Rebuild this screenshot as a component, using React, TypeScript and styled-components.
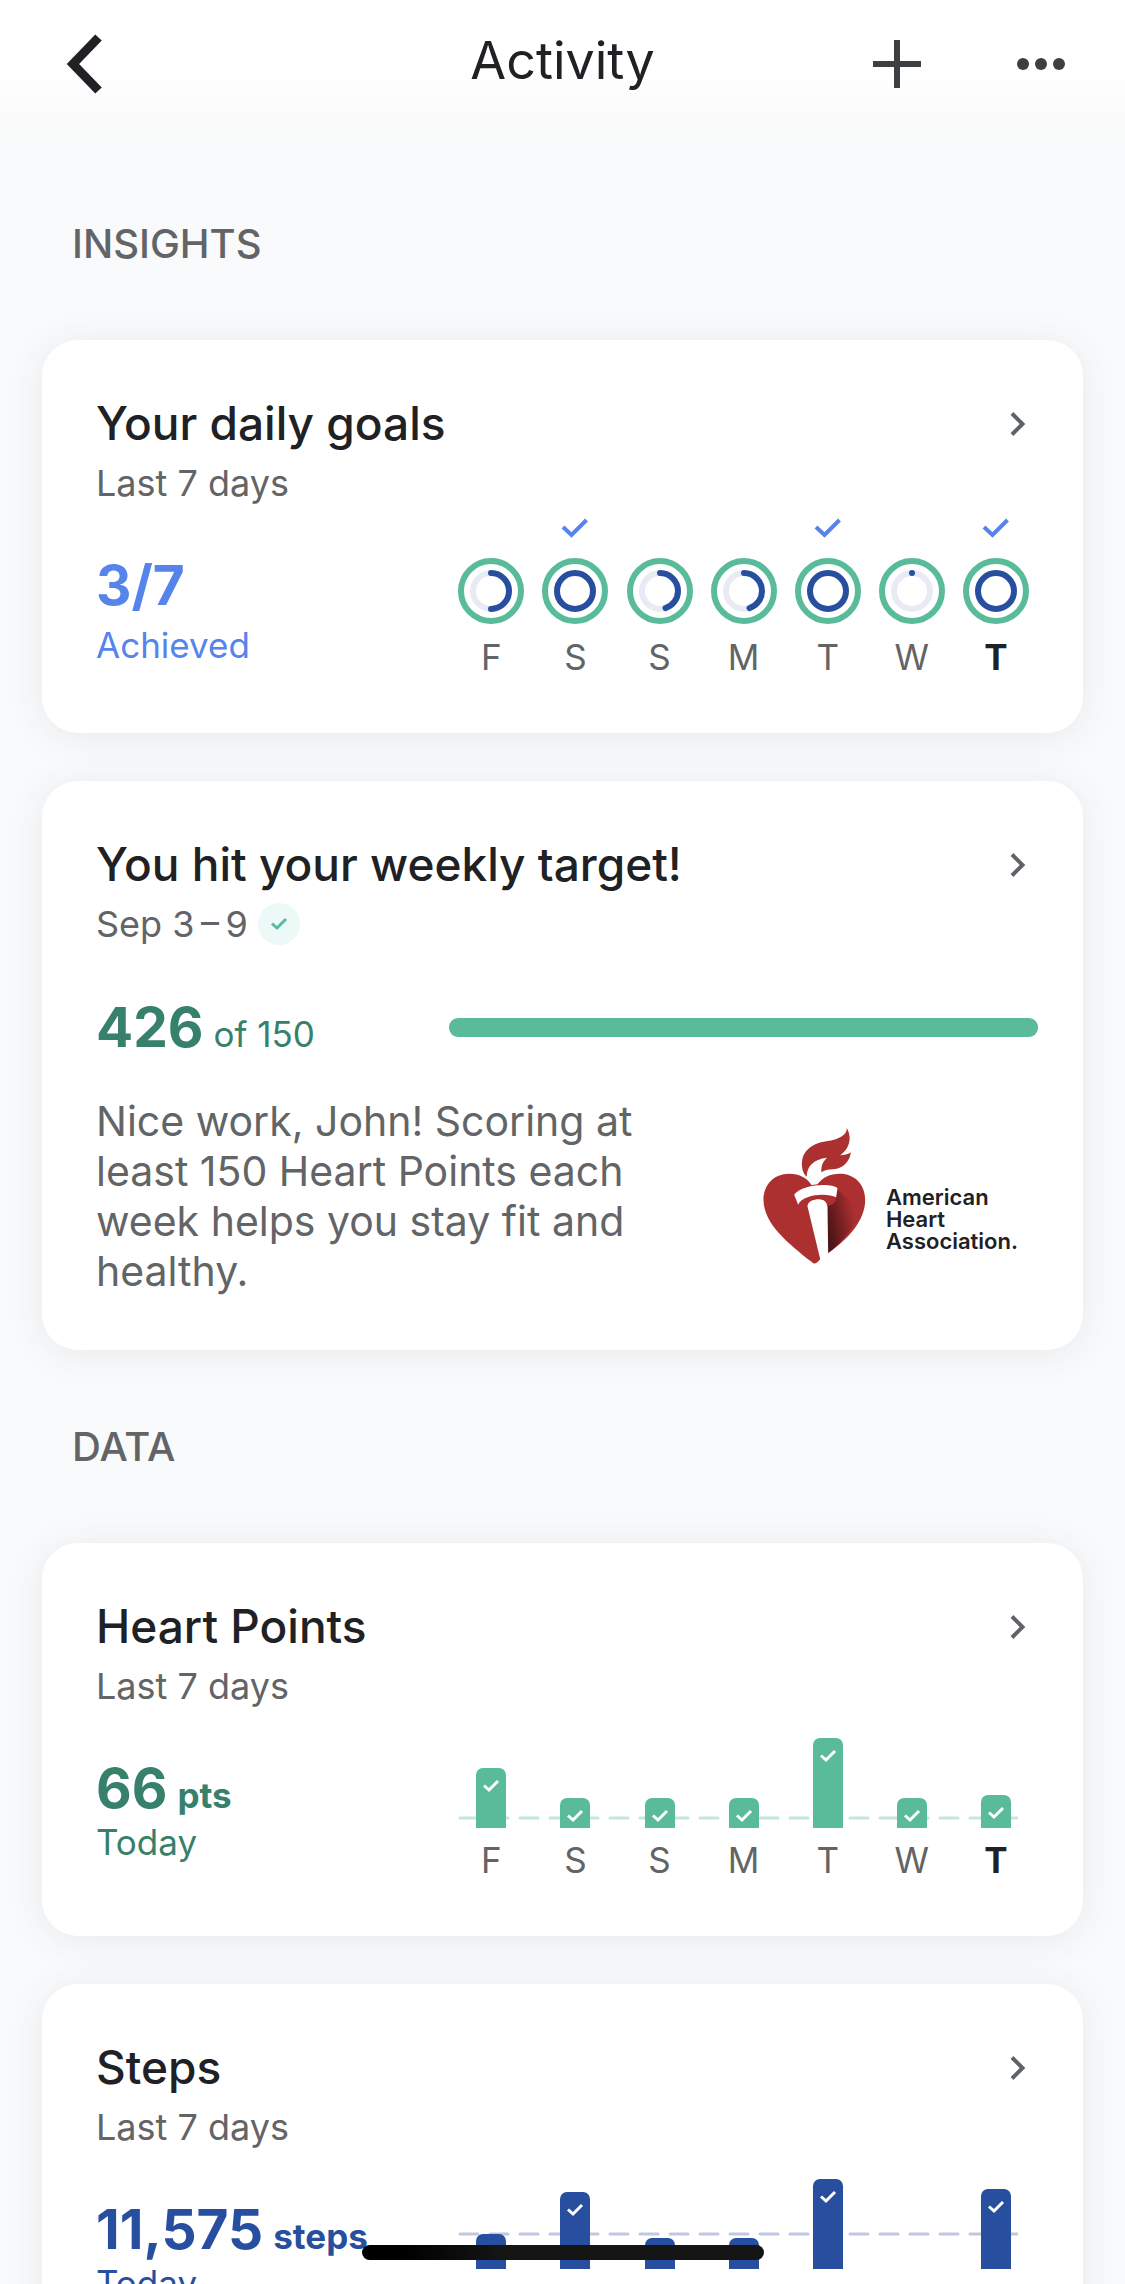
import React from "react";
import styled, { createGlobalStyle } from "styled-components";

const color = {
  page: "#f9fafc",
  ink: "#202124",
  muted: "#636466",
  sky: "#5684ea",
  navy: "#284f9f",
  navyLine: "#bfc8e1",
  mint: "#59bb9a",
  mintLine: "#c3e8db",
  mintPale: "#ecf9f7",
  forest: "#37806b",
  track: "#e8ebf4",
};

const GlobalStyle = createGlobalStyle`
  * { box-sizing: border-box; }
  body {
    margin: 0;
    background: ${color.page};
    font-family: Inter, "Liberation Sans", sans-serif;
    color: ${color.ink};
  }
`;

const Screen = styled.div`
  display: flex;
  flex-direction: column;
  height: 100vh;
  overflow: hidden;
  background: ${color.page};
`;

const TopBar = styled.header`
  flex: none;
  display: grid;
  grid-template-columns: 1fr auto 1fr;
  align-items: start;
  height: 147px;
  padding: 28px 48px 0;
  background: linear-gradient(#ffffff 45%, #fafafa 85%, ${color.page} 100%);
`;

const ScreenTitle = styled.h1`
  margin: 0;
  font-size: 52px;
  line-height: 66px;
  font-weight: 400;
`;

const Actions = styled.div`
  display: flex;
  justify-content: flex-end;
  gap: 72px;
`;

const IconButton = styled.button<{ $small?: boolean }>`
  display: grid;
  place-items: center;
  width: ${(p) => (p.$small ? "40px" : "72px")};
  height: ${(p) => (p.$small ? "58px" : "72px")};
  padding: 0;
  border: 0;
  background: none;
  color: inherit;
  cursor: pointer;
`;

const Content = styled.main`
  flex: 1;
  overflow-y: auto;
  scrollbar-width: none;
  padding: 0 42px 48px;
`;

const Section = styled.section`
  display: flex;
  flex-direction: column;
  gap: 48px;
`;

const SectionTitle = styled.h2`
  margin: 73px 0 24px;
  padding-left: 30px;
  font-size: 40px;
  line-height: 48px;
  font-weight: 500;
  color: ${color.muted};
`;

const CardBox = styled.article`
  padding: 55px 45px 54px 54px;
  border-radius: 36px;
  background: #ffffff;
  box-shadow: 0 4px 36px rgba(60, 64, 67, 0.09);
`;

const CardHead = styled.header`
  display: flex;
  justify-content: space-between;
  align-items: flex-start;
`;

const CardTitle = styled.h3`
  margin: 0 0 10px;
  font-size: 46px;
  line-height: 56px;
  font-weight: 500;
`;

const CardSub = styled.p`
  display: flex;
  align-items: center;
  gap: 10px;
  margin: 0;
  font-size: 36px;
  line-height: 44px;
  color: ${color.muted};
`;

const Badge = styled.span`
  display: grid;
  place-items: center;
  width: 42px;
  height: 42px;
  border-radius: 50%;
  background: ${color.mintPale};
  color: ${color.mint};
`;

const Split = styled.div<{ $center?: boolean }>`
  display: grid;
  grid-template-columns: minmax(0, 3fr) minmax(0, 5fr);
  align-items: ${(p) => (p.$center ? "center" : "start")};
  margin-top: ${(p) => (p.$center ? "49px" : "10px")};
`;

const StatBlock = styled.div<{ $gap?: boolean }>`
  display: flex;
  flex-direction: column;
  gap: ${(p) => (p.$gap ? "6px" : "0")};
  padding-top: 38px;
`;

const Figure = styled.div<{ $tone: string }>`
  display: flex;
  align-items: baseline;
  gap: 10px;
  white-space: nowrap;
  color: ${(p) => p.$tone};
`;

const FigureValue = styled.strong`
  font-size: 55px;
  line-height: 64px;
  font-weight: 700;
`;

const FigureUnit = styled.span<{ $light?: boolean }>`
  font-size: 35px;
  line-height: 44px;
  font-weight: ${(p) => (p.$light ? 400 : 700)};
`;

const FigureNote = styled.span<{ $tone: string }>`
  font-size: 35px;
  line-height: 44px;
  color: ${(p) => p.$tone};
`;

const WeekGrid = styled.div`
  display: grid;
  grid-template-columns: repeat(7, 1fr);
  justify-items: center;
`;

const Plot = styled(WeekGrid)`
  position: relative;
  align-items: end;
  height: 110px;
  margin-bottom: 10px;
`;

const DayLabel = styled.span<{ $today?: boolean }>`
  font-size: 35px;
  line-height: 44px;
  font-weight: ${(p) => (p.$today ? 700 : 400)};
  color: ${(p) => (p.$today ? color.ink : color.muted)};
`;

const RingDay = styled.div`
  display: flex;
  flex-direction: column;
  align-items: center;
  gap: 20px;
  padding-bottom: 1px;
  color: ${color.sky};
`;

const RingArt = styled.svg`
  display: block;
`;

const TargetLine = styled.svg<{ $rise: number; $tone: string }>`
  position: absolute;
  left: 9px;
  bottom: ${(p) => p.$rise}px;
  width: calc(100% - 29px);
  height: 4px;
  stroke: ${(p) => p.$tone};
`;

const Bar = styled.div<{ $tone: string }>`
  position: relative;
  display: flex;
  justify-content: center;
  width: 30px;
  padding-top: 11px;
  border-radius: 7px 7px 0 0;
  background: ${(p) => p.$tone};
  color: #ffffff;
  overflow: hidden;
`;

const Meter = styled.div`
  height: 19px;
  border-radius: 9px;
  background: ${color.mint};
`;

const Summary = styled.div`
  display: grid;
  grid-template-columns: minmax(0, 3fr) minmax(0, 2fr);
  align-items: center;
  margin-top: 37px;
`;

const Message = styled.p`
  margin: 0;
  font-size: 41px;
  line-height: 50px;
  color: ${color.muted};
`;

const Partner = styled.div`
  display: flex;
  justify-content: flex-end;
  align-items: flex-end;
  gap: 20px;
  padding-right: 20px;
`;

const PartnerName = styled.span`
  display: flex;
  flex-direction: column;
  padding-bottom: 12px;
  font-size: 22px;
  line-height: 22px;
  font-weight: 600;
`;

const HomeIndicator = styled.div`
  position: fixed;
  bottom: 24px;
  left: 50%;
  width: 36%;
  max-width: 402px;
  height: 15px;
  border-radius: 8px;
  background: linear-gradient(90deg, #000000 10%, #151515 35%);
  transform: translateX(-50%);
`;

type TickProps = { width: number; height: number; d: string; weight: number };

function Tick({ width, height, d, weight }: TickProps) {
  return (
    <svg width={width} height={height} fill="none" stroke="currentColor" strokeWidth={weight} aria-hidden="true">
      <path d={d} />
    </svg>
  );
}

const GoalTick = () => <Tick width={28} height={20} d="M2 9L10.5 17L25.5 2" weight={4} />;
const BarTick = () => <Tick width={18} height={14} d="M2 6.5L7 11L16 2" weight={3} />;

function Ring({ progress }: { progress: number }) {
  return (
    <RingArt width="66" height="66" viewBox="0 0 66 66" fill="none" strokeWidth="6" aria-hidden="true">
      <circle cx="33" cy="33" r="30" stroke={color.mint} />
      <circle cx="33" cy="33" r="18" stroke={color.track} />
      {progress === 0 ? (
        <circle cx="33" cy="15" r="3" fill={color.navy} />
      ) : (
        <circle
          cx="33"
          cy="33"
          r="18"
          stroke={color.navy}
          strokeLinecap="round"
          pathLength="100"
          strokeDasharray={progress === 100 ? undefined : `${progress} 100`}
          transform="rotate(-90 33 33)"
        />
      )}
    </RingArt>
  );
}

function HeartTorch() {
  return (
    <svg width="103" height="136" viewBox="72 57 308 408" aria-hidden="true">
      <defs>
        <linearGradient id="torchShade" gradientUnits="userSpaceOnUse" x1="266" y1="350" x2="352" y2="330">
          <stop offset="0" stopColor="#4f1417" />
          <stop offset="0.5" stopColor="#7d2225" />
          <stop offset="1" stopColor="#ad3030" />
        </linearGradient>
      </defs>
      <path
        fill="#ad3030"
        d="M218 459C224 465 229 465 234 460L267 432C332 386 378 332 378 272C378 226 346 194 302 194C272 194 249 206 235 226L217 228C206 208 181 194 150 194C104 194 73 228 73 272C73 344 148 404 218 459Z"
      />
      <path fill="url(#torchShade)" d="M292 240L366 304C350 348 312 398 266 433L262 290Z" />
      <path fill="#ffffff" d="M204 288C208 274 224 270 240 270C256 270 266 280 265 292L267 432L267 465L236 465L243 450Z" />
      <path
        fill="#ad3030"
        d="M175 286C190 258 262 248 291 263C293 278 281 288 264 292C263 278 254 271 238 271C220 271 207 279 205 290Z"
      />
      <path fill="#ffffff" d="M165 257C186 226 276 220 295 237L291 265C264 250 190 256 177 287Z" />
      <path
        fill="#ad3030"
        d="M323 57C324 78 300 91 262 97C214 103 188 130 188 164C188 184 195 197 203 203C202 174 222 150 264 146C250 158 245 172 247 190C260 179 276 182 293 179C317 174 332 154 335 130C326 137 314 139 303 139C326 123 342 92 323 57Z"
      />
    </svg>
  );
}

function Card({ title, sub, children }: { title: string; sub: React.ReactNode; children: React.ReactNode }) {
  return (
    <CardBox>
      <CardHead>
        <div>
          <CardTitle>{title}</CardTitle>
          <CardSub>{sub}</CardSub>
        </div>
        <IconButton $small aria-label={`Open ${title}`}>
          <svg width="18" height="28" fill="none" stroke="#5f6368" strokeWidth="4" aria-hidden="true">
            <path d="M3 3.5L13.5 14L3 24.5" />
          </svg>
        </IconButton>
      </CardHead>
      {children}
    </CardBox>
  );
}

const days = ["F", "S", "S", "M", "T", "W", "T"];
const goalProgress = [50, 100, 45, 45, 100, 0, 100];

type Day = { height: number; met: boolean };
const heartPoints: Day[] = [60, 30, 30, 30, 90, 30, 33].map((height) => ({ height, met: true }));
const steps: Day[] = [35, 77, 31, 31, 90, 0, 80].map((height) => ({ height, met: height > 35 }));

function DayLabels() {
  return (
    <WeekGrid>
      {days.map((day, i) => (
        <DayLabel key={i} $today={i === days.length - 1}>
          {day}
        </DayLabel>
      ))}
    </WeekGrid>
  );
}

type StatProps = { value: string; unit?: string; note: string; tone: string; spaced?: boolean };

function Stat({ value, unit, note, tone, spaced }: StatProps) {
  return (
    <StatBlock $gap={spaced}>
      <Figure $tone={tone}>
        <FigureValue>{value}</FigureValue>
        {unit && <FigureUnit>{unit}</FigureUnit>}
      </Figure>
      <FigureNote $tone={tone}>{note}</FigureNote>
    </StatBlock>
  );
}

type BarChartProps = { data: Day[]; tone: string; lineTone: string; lineRise: number };

function BarChart({ data, tone, lineTone, lineRise }: BarChartProps) {
  return (
    <div>
      <Plot>
        <TargetLine $rise={lineRise} $tone={lineTone} aria-hidden="true">
          <line x1="2" x2="100%" y1="2" y2="2" strokeWidth="3" strokeLinecap="round" strokeDasharray="18 12" />
        </TargetLine>
        {data.map((day, i) => (
          <Bar key={i} $tone={tone} style={day.height ? { height: day.height } : { visibility: "hidden" }}>
            {day.met && <BarTick />}
          </Bar>
        ))}
      </Plot>
      <DayLabels />
    </div>
  );
}

export default function App() {
  return (
    <Screen>
      <GlobalStyle />
      <TopBar>
        <IconButton aria-label="Back">
          <svg width="72" height="72" fill="none" stroke={color.ink} strokeWidth="9" aria-hidden="true">
            <path d="M50.5 9.5L25 36L50.5 62.5" />
          </svg>
        </IconButton>
        <ScreenTitle>Activity</ScreenTitle>
        <Actions>
          <IconButton aria-label="Add">
            <svg width="48" height="48" stroke="#3c4043" strokeWidth="6" aria-hidden="true">
              <path d="M24 0V48M0 24H48" />
            </svg>
          </IconButton>
          <IconButton aria-label="More">
            <svg width="50" height="14" fill="#3c4043" aria-hidden="true">
              <circle cx="7" cy="7" r="6" />
              <circle cx="25" cy="7" r="6" />
              <circle cx="43" cy="7" r="6" />
            </svg>
          </IconButton>
        </Actions>
      </TopBar>

      <Content>
        <Section>
          <SectionTitle>INSIGHTS</SectionTitle>
          <Card title="Your daily goals" sub="Last 7 days">
            <Split>
              <Stat value="3/7" note="Achieved" tone={color.sky} spaced />
              <div>
                <Plot>
                  {goalProgress.map((progress, i) => (
                    <RingDay key={i}>
                      {progress === 100 && <GoalTick />}
                      <Ring progress={progress} />
                    </RingDay>
                  ))}
                </Plot>
                <DayLabels />
              </div>
            </Split>
          </Card>

          <Card
            title="You hit your weekly target!"
            sub={
              <>
                <span>{"Sep 3\u2009–\u20099"}</span>
                <Badge>
                  <BarTick />
                </Badge>
              </>
            }
          >
            <Split $center>
              <Figure $tone={color.forest}>
                <FigureValue>426</FigureValue>
                <FigureUnit $light>of 150</FigureUnit>
              </Figure>
              <Meter role="img" aria-label="426 of 150" />
            </Split>
            <Summary>
              <Message>
                Nice work, John! Scoring at least 150 Heart Points each week helps you stay fit and healthy.
              </Message>
              <Partner>
                <HeartTorch />
                <PartnerName>
                  <span>American</span>
                  <span>Heart</span>
                  <span>Association.</span>
                </PartnerName>
              </Partner>
            </Summary>
          </Card>
        </Section>

        <Section>
          <SectionTitle>DATA</SectionTitle>
          <Card title="Heart Points" sub="Last 7 days">
            <Split>
              <Stat value="66" unit="pts" note="Today" tone={color.forest} />
              <BarChart data={heartPoints} tone={color.mint} lineTone={color.mintLine} lineRise={8} />
            </Split>
          </Card>

          <Card title="Steps" sub="Last 7 days">
            <Split>
              <Stat value="11,575" unit="steps" note="Today" tone={color.navy} />
              <BarChart data={steps} tone={color.navy} lineTone={color.navyLine} lineRise={33} />
            </Split>
          </Card>
        </Section>
      </Content>
      <HomeIndicator />
    </Screen>
  );
}
